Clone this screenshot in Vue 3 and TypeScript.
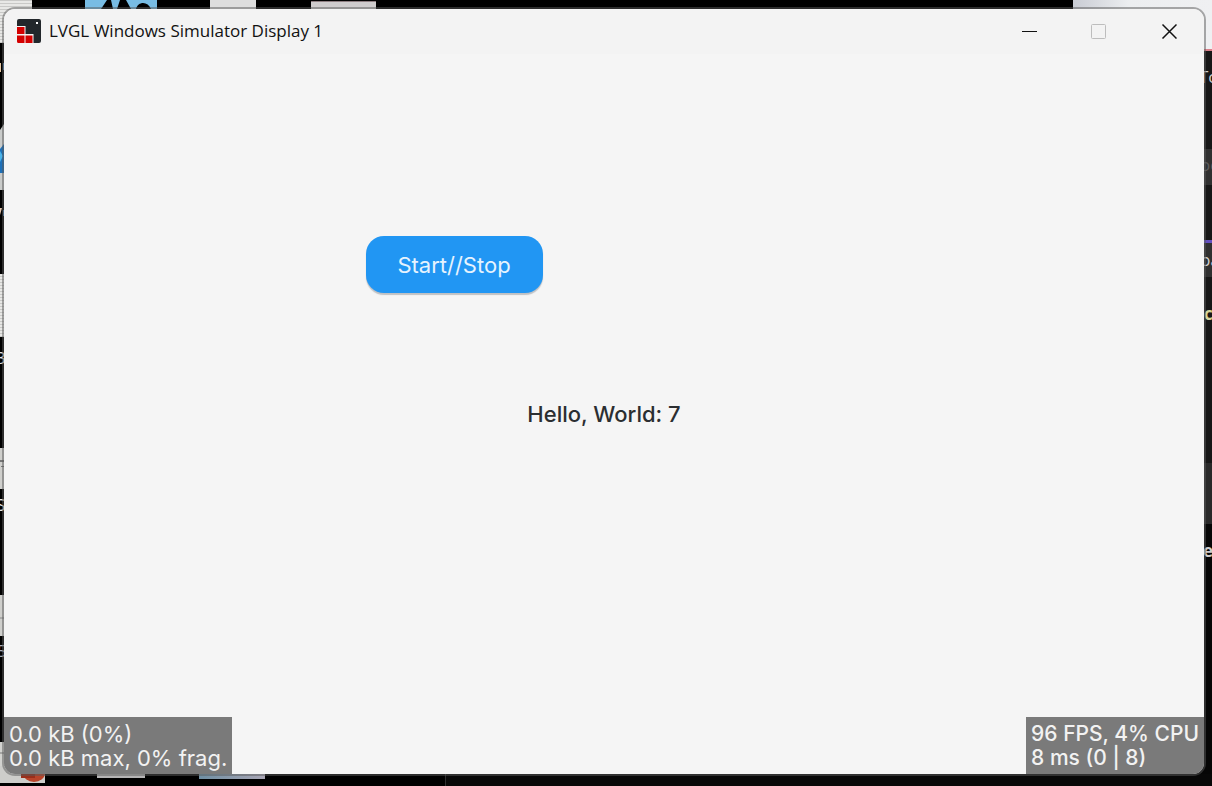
<script setup lang="ts">
import { ref } from 'vue'

const title = 'LVGL Windows Simulator Display 1'
const count = ref(7)
const running = ref(false)
const memory = ['0.0 kB (0%)', '0.0 kB max, 0% frag.']
const performance = ['96 FPS, 4% CPU', '8 ms (0 | 8)']

function toggle() {
  running.value = !running.value
}
</script>

<template>
  <div class="desktop">
    <svg class="backdrop" viewBox="0 0 1212 786" preserveAspectRatio="none" aria-hidden="true">
      <defs>
        <pattern id="lines" width="4" height="3" patternUnits="userSpaceOnUse">
          <rect width="4" height="3" fill="#e8e8e6" />
          <rect width="4" height="1" fill="#c9c9c7" />
        </pattern>
        <linearGradient id="sky" x1="0" x2="1">
          <stop offset="0" stop-color="#c9ccd4" />
          <stop offset=".4" stop-color="#eceef0" />
          <stop offset="1" stop-color="#eff0f2" />
        </linearGradient>
        <linearGradient id="strip" x1="0" x2="1">
          <stop offset="0" stop-color="#6f8fa3" />
          <stop offset="1" stop-color="#a9a6b5" />
        </linearGradient>
      </defs>
      <rect width="1212" height="786" fill="#000" />
      <rect width="32" height="43" fill="url(#lines)" />
      <rect x="85" width="72" height="9" fill="#78bce4" />
      <path d="M101 9 107 0h4l2 9M117 9l3-9h6l5 9M136 9c2-8 12-8 15 0" fill="#000" />
      <rect x="210" width="46" height="9" fill="#dedede" />
      <rect x="311" y="1" width="65" height="8" fill="#cfcccd" />
      <rect x="311" y="1" width="65" height="1" fill="#8f7f82" />
      <rect x="1073" width="139" height="50" fill="url(#sky)" />

      <path d="M0 63h1v9H0z" fill="#e6c8a4" />
      <path d="M3 63h1v7H3z" fill="#4d83b8" />
      <path d="M0 130 4 124v66H0z" fill="#c9cbca" />
      <path d="M0 149 4 144v29H0z" fill="#1d70ba" />
      <path d="M0 151 3 156 0 162z" fill="#4ab4ec" />
      <path d="M0 208h2l-2 7z" fill="#e2c4ac" />
      <path d="M3 210h1v6H3z" fill="#4d83b8" />
      <rect y="274" width="4" height="63" fill="url(#lines)" />
      <rect y="448" width="4" height="41" fill="#cfcfcc" />
      <path d="M0 460h4v2H0zM1 466h3v1H1z" fill="#777" />
      <rect y="595" width="4" height="41" fill="#cfcfcc" />
      <path d="M0 618h4" stroke="#888" />
      <g class="edge-text" fill="#e8e8e8">
        <text x="-4" y="364">3</text>
        <text x="-4" y="511">S</text>
        <text x="-3" y="657" fill="#a6adb8">5</text>
      </g>

      <rect x="1200" y="49" width="12" height="737" fill="#171717" />
      <rect x="1200" y="49" width="12" height="2" fill="#d9808a" />
      <rect x="1200" y="149" width="12" height="36" fill="#303030" />
      <rect x="1200" y="240" width="12" height="3" fill="#6450c0" />
      <rect x="1200" y="243" width="12" height="34" fill="#303030" />
      <rect x="1200" y="463" width="12" height="61" fill="#292929" />
      <rect x="1200" y="524" width="12" height="262" fill="#060606" />
      <g class="edge-text" fill="#cfcfcf">
        <text x="1199" y="83">To</text>
        <text x="1200" y="171" fill="#5c5c5c">oc</text>
        <text x="1200" y="266">pa</text>
        <text x="1204" y="320" fill="#d6d59b" class="strong">c</text>
        <text x="1203" y="557" class="strong">e</text>
      </g>

      <rect x="446" y="774" width="766" height="12" fill="#080808" />
      <rect x="445" y="774" width="1" height="12" fill="#303030" />
      <rect y="742" width="4" height="41" fill="#d2d2cf" />
      <rect y="766" width="45" height="17" fill="#cdcdca" />
      <path d="M0 753h4" stroke="#777" />
      <ellipse cx="34" cy="773" rx="11" ry="9" fill="#b9442a" />
      <path d="M21 770h14v8H21z" fill="#9a2f1b" />
      <rect x="97" y="772" width="48" height="6" fill="#b5b4b5" />
      <rect x="199" y="772" width="66" height="7" fill="url(#strip)" />
    </svg>

    <main class="window">
      <header class="titlebar">
        <svg class="logo" viewBox="0 0 24 24" aria-hidden="true">
          <path d="M2 0h20a2 2 0 0 1 2 2v20a2 2 0 0 1-2 2h-5.500v-9H8.500V7H0V2a2 2 0 0 1 2-2z" fill="#22272b" />
          <rect x="19" y="3" width="2" height="2" fill="#fff" />
          <path d="M0 8h7.500v7H0zM0 16.500h7.500V24H1.500a1.500 1.500 0 0 1-1.500-1.500zM8.500 16.500H15.500V24H8.500z" fill="#d40000" />
        </svg>
        <h1 class="title">{{ title }}</h1>
        <div class="controls">
          <button type="button" aria-label="Minimize">
            <svg viewBox="0 0 16 16"><path d="M1 8.500h15" stroke="#111" /></svg>
          </button>
          <button type="button" aria-label="Maximize" disabled>
            <svg viewBox="0 0 16 16">
              <rect x="0.500" y="1.500" width="14" height="14" rx="1" fill="none" stroke="#bdbdbd" />
            </svg>
          </button>
          <button type="button" aria-label="Close">
            <svg viewBox="0 0 16 16">
              <path d="M1.500 1.500l14 14M15.500 1.500l-14 14" stroke="#111" stroke-width="1.500" />
            </svg>
          </button>
        </div>
      </header>

      <section class="screen">
        <button type="button" class="toggle" :aria-pressed="running" @click="toggle">Start//Stop</button>
        <p class="hello">Hello, World: {{ count }}</p>
        <footer class="monitors">
          <div class="monitor memory">
            <div v-for="line in memory" :key="line">{{ line }}</div>
          </div>
          <div class="monitor">
            <div v-for="line in performance" :key="line">{{ line }}</div>
          </div>
        </footer>
      </section>
    </main>
  </div>
</template>

<style>
body {
  margin: 0;
  background: #000;
}
</style>

<style scoped>
.desktop {
  position: relative;
  box-sizing: border-box;
  display: flex;
  min-height: 100vh;
  padding: 7px 6px 10px 2px;
  overflow: hidden;
}

.backdrop {
  position: absolute;
  inset: 0;
  width: 100%;
  height: 100%;
}

.edge-text {
  font: 17px "Open Sans", sans-serif;
}

.strong {
  font-weight: 700;
}

.window {
  position: relative;
  flex: 1;
  display: flex;
  flex-direction: column;
  border: 2px solid rgba(90, 90, 90, 0.5);
  border-radius: 13px;
  background: #f5f5f5;
  background-clip: padding-box;
  overflow: hidden;
}

.titlebar {
  box-sizing: border-box;
  display: flex;
  align-items: center;
  height: 45px;
  padding: 0 0 2px 13px;
  background: #f3f3f3;
}

.logo {
  width: 24px;
  height: 24px;
}

.title {
  flex: 1;
  margin: 0 0 0 8px;
  font: 400 17px/24px "Open Sans", sans-serif;
  color: #111;
}

.controls {
  display: flex;
}

.controls button {
  display: grid;
  place-items: center;
  width: 70px;
  height: 43px;
  padding: 0;
  border: 0;
  background: none;
}

.controls svg {
  width: 16px;
  height: 16px;
}

.screen {
  flex: 1;
  display: grid;
  grid-template-rows: 1fr auto 1fr;
  justify-items: center;
  font: 500 22px/24px Inter, sans-serif;
}

.toggle {
  align-self: end;
  width: 177px;
  height: 57px;
  margin: 0 300px 109px 0;
  padding: 0;
  border: 0;
  border-radius: 18px;
  background: #2196f3;
  box-shadow: 0 2px 1px #bfc1c4;
  color: #e6f3fe;
  font: inherit;
  font-weight: 400;
}

.hello {
  margin: 0;
  color: #2b2e31;
}

.monitors {
  align-self: end;
  justify-self: stretch;
  display: flex;
  justify-content: space-between;
  font-size: 21px;
}

.monitor {
  padding: 5px 5px 4px;
  background: #7a7a7a;
  color: #f2f2f2;
  white-space: nowrap;
}

.memory {
  font-size: 22px;
  font-weight: 400;
}
</style>
